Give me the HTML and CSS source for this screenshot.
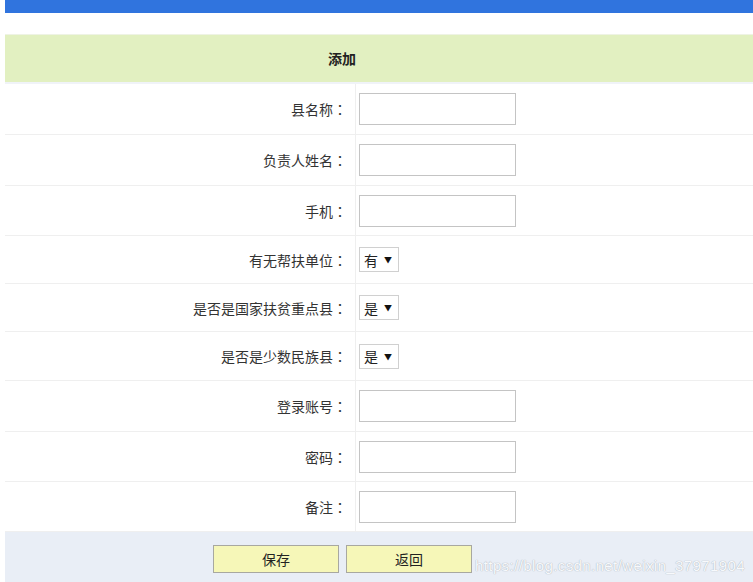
FILE: index.html
```html
<!DOCTYPE html>
<html lang="zh-CN">
<head>
<meta charset="utf-8">
<title>添加</title>
<link rel="stylesheet" href="styles.css">
</head>
<body>
<div class="page">
  <div class="topbar"></div>
  <div class="form">
    <div class="head">添加</div>
    <div class="row h51"><div class="label">县名称<span class="colon">：</span></div><div class="value"><input class="txt" type="text"></div></div>
    <div class="row h51"><div class="label">负责人姓名<span class="colon">：</span></div><div class="value"><input class="txt" type="text"></div></div>
    <div class="row h50"><div class="label">手机<span class="colon">：</span></div><div class="value"><input class="txt" type="text"></div></div>
    <div class="row h48"><div class="label">有无帮扶单位<span class="colon">：</span></div><div class="value"><span class="sel">有<span class="arrow">▼</span></span></div></div>
    <div class="row h48"><div class="label">是否是国家扶贫重点县<span class="colon">：</span></div><div class="value"><span class="sel">是<span class="arrow">▼</span></span></div></div>
    <div class="row h49"><div class="label">是否是少数民族县<span class="colon">：</span></div><div class="value"><span class="sel">是<span class="arrow">▼</span></span></div></div>
    <div class="row h51"><div class="label">登录账号<span class="colon">：</span></div><div class="value"><input class="txt" type="text"></div></div>
    <div class="row h50"><div class="label">密码<span class="colon">：</span></div><div class="value"><input class="txt" type="text"></div></div>
    <div class="row h50"><div class="label">备注<span class="colon">：</span></div><div class="value"><input class="txt" type="text"></div></div>
    <div class="foot">
      <button class="btn">保存</button>
      <button class="btn">返回</button>
      <span class="watermark">https://blog.csdn.net/weixin_37971904</span>
    </div>
  </div>
</div>
</body>
</html>
```

FILE: styles.css
```css
html, body {
  margin: 0;
  padding: 0;
  background: #fff;
}
body {
  font-family: "Noto Sans CJK SC", "Noto Sans", sans-serif;
  font-size: 14px;
  color: #333;
}
.page {
  padding-left: 5px;
}
.topbar {
  height: 13px;
  background: #3074de;
}
.form {
  margin-top: 21px;
  position: relative;
}
.head {
  box-sizing: border-box;
  height: 50px;
  border-top: 1px solid #eef3e4;
  border-bottom: 2px solid #f0f3f8;
  background: #e2f0c1;
  display: flex;
  align-items: center;
  justify-content: center;
  padding-right: 74px;
  padding-bottom: 1px;
  font-weight: bold;
  color: #222;
}
.row {
  box-sizing: border-box;
  display: flex;
  border-bottom: 1px solid #efefef;
}
.h51 { height: 51px; }
.h50 { height: 50px; }
.h49 { height: 49px; }
.h48 { height: 48px; }
.label {
  width: 342px;
  padding-right: 8px;
  border-right: 1px solid #efefef;
  display: flex;
  align-items: center;
  justify-content: flex-end;
}
.colon {
  font-family: "Noto Sans CJK TC", "Noto Sans CJK SC", sans-serif;
}
.value {
  flex: 1;
  display: flex;
  align-items: center;
  padding-left: 3px;
}
.txt {
  box-sizing: border-box;
  width: 157px;
  height: 32px;
  margin: 0;
  border: 1px solid #c4c4c4;
  background: #fff;
  padding: 0 4px;
}
.sel {
  box-sizing: border-box;
  width: 40px;
  height: 25px;
  border: 1px solid #d0d0d0;
  background: #fff;
  display: flex;
  align-items: center;
  padding-left: 4px;
  font-size: 14px;
  color: #222;
}
.arrow {
  font-size: 8px;
  margin-left: 6px;
  color: #111;
}
.foot {
  height: 50px;
  background: #e9eef6;
  display: flex;
  align-items: center;
  gap: 7px;
  padding-left: 208px;
  padding-top: 3px;
  box-sizing: border-box;
}
.btn {
  box-sizing: border-box;
  width: 126px;
  height: 28px;
  margin: 0;
  border: 1px solid #a8a8a0;
  background: #f6f7b8;
  font-family: "Noto Sans CJK SC", sans-serif;
  font-size: 14px;
  color: #222;
  padding: 0;
}
.watermark {
  position: absolute;
  left: 470px;
  bottom: 8px;
  font-family: "Liberation Sans", Arial, sans-serif;
  font-size: 15px;
  letter-spacing: 0.4px;
  color: #f7f9fc;
  text-shadow: 0 0 1px #a9b0b9, 0 0 1px #c0c6ce;
  white-space: nowrap;
}
```
